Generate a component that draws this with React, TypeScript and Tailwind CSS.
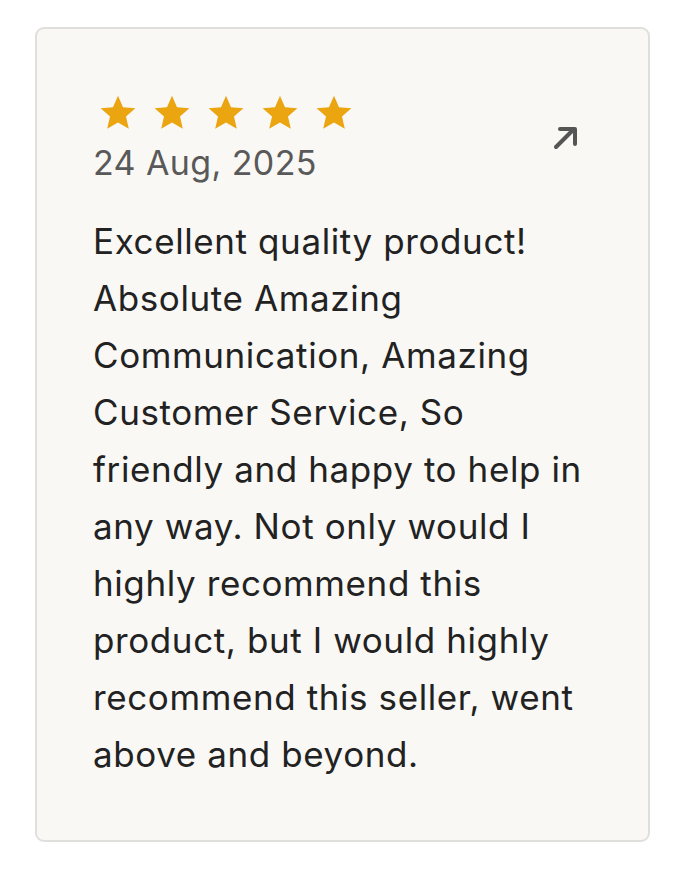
import React from "react";

const Star = () => (
  <svg width="38" height="36" viewBox="0 0 24 23" className="shrink-0">
    <path
      d="M12 0.5l3.2 7.3 7.9 0.7-6 5.3 1.8 7.8L12 17.5l-6.9 4.1 1.8-7.8-6-5.3 7.9-0.7z"
      fill="#eaa511"
    />
  </svg>
);

const lines = [
  "Excellent quality product!",
  "Absolute Amazing",
  "Communication, Amazing",
  "Customer Service, So",
  "friendly and happy to help in",
  "any way. Not only would I",
  "highly recommend this",
  "product, but I would highly",
  "recommend this seller, went",
  "above and beyond.",
];

const font = { fontFamily: 'Inter, "Noto Sans", sans-serif' };

export default function App() {
  return (
    <div className="w-[676px] h-[870px] bg-white pt-[27px] pl-[35px]">
      <div className="w-[615px] h-[815px] rounded-[9px] border-2 border-[#e0dfdb] bg-[#f9f8f5] pl-[56px] pr-[68px] pt-[66px]">
        <div className="flex items-start justify-between">
          <div className="flex flex-col">
            <div className="flex gap-[16px] pl-[6px]">
              <Star />
              <Star />
              <Star />
              <Star />
              <Star />
            </div>
            <div
              className="mt-[11px] text-[34px] leading-[42px] tracking-[0.4px] text-[#595959]"
              style={font}
            >
              24 Aug, 2025
            </div>
          </div>
          <svg width="28" height="28" viewBox="0 0 28 28" className="mt-[29px]">
            <path d="M4 23L21 6" stroke="#555" strokeWidth="4" strokeLinecap="round" />
            <path d="M8 5H23V20" stroke="#555" strokeWidth="4" strokeLinecap="round" strokeLinejoin="round" fill="none" />
          </svg>
        </div>
        <div
          className="mt-[29px] text-[35px] leading-[57px] tracking-[0.6px] text-[#222222]"
          style={font}
        >
          {lines.map((l) => (
            <div key={l} className="whitespace-nowrap">
              {l}
            </div>
          ))}
        </div>
      </div>
    </div>
  );
}
